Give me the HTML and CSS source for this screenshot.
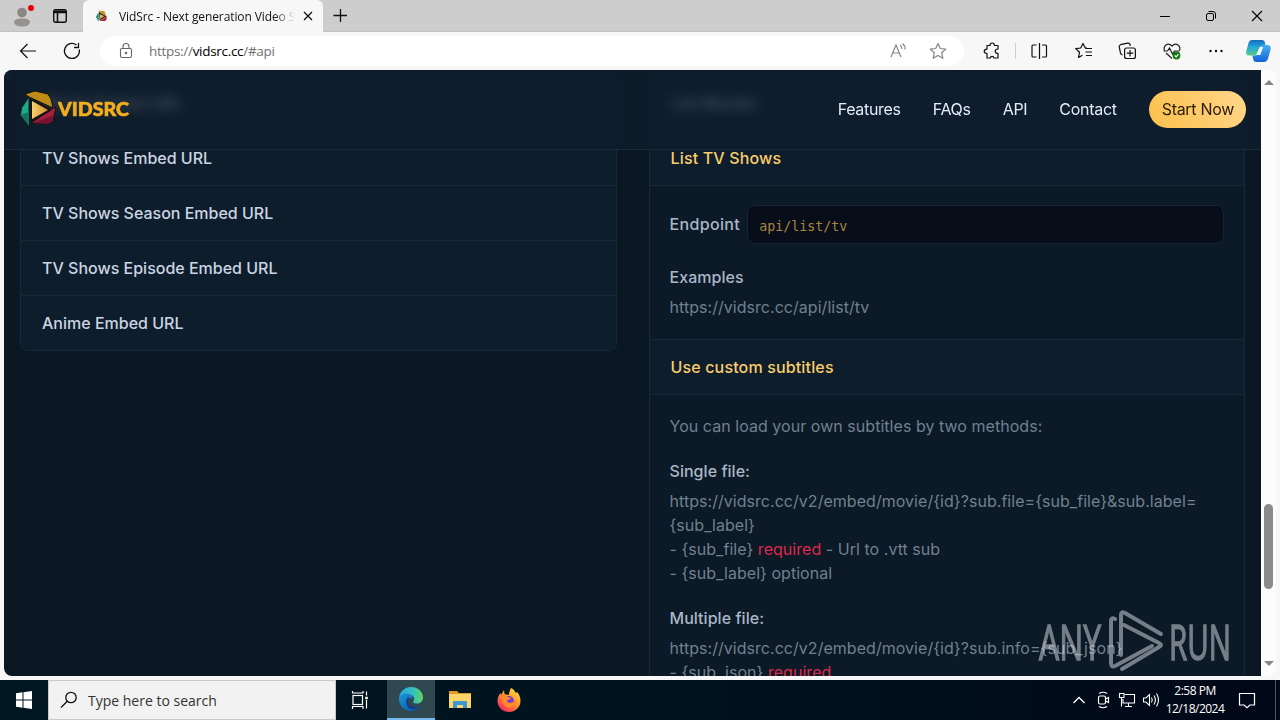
FILE: index.html
```html
<!DOCTYPE html>
<html lang="en">
<head>
  <meta charset="UTF-8">
  <meta name="viewport" content="width=device-width, initial-scale=1.0">
  <title>VidSrc - Next generation Video Streaming</title>
  <link rel="stylesheet" href="styles.css">
</head>
<body>
  <div class="desktop">

    <!-- Browser tabs -->
    <div class="tab-bar">
      <div class="tab-tools">
        <svg width="44" height="32" viewBox="0 0 44 32">
          <circle cx="22" cy="12.5" r="4.8" fill="#8a8683"/>
          <path d="M14 22.5c0-3 3-4 8-4s8 1 8 4c-1 3-4 4-8 4s-7-1-8-4z" fill="#96928f"/>
          <circle cx="31" cy="8" r="3" fill="#e8000c"/>
        </svg>
        <svg width="32" height="32" viewBox="0 0 32 32" fill="none" stroke="#111" stroke-width="1.4">
          <rect x="9.7" y="9.7" width="12.6" height="12.6" rx="2"/>
          <path d="M10 11.2h12M10 12.4h12M13.5 12v10" stroke-width="1.6"/>
        </svg>
      </div>
      <div class="tab">
        <svg class="favicon" width="12" height="12" viewBox="0 0 36 36">
          <path d="M8 2l17 1 6 15-22-13z" fill="#c39420"/>
          <path d="M8 6v29L0 21z" fill="#14866b"/>
          <path d="M33 18l-2 12-4 3H12z" fill="#b32033"/>
          <path d="M9 6l22 13L11 32z" fill="#231b14"/>
          <path d="M12 12l13 7-13 8z" fill="#e9b050"/>
        </svg>
        <span class="tab-title">VidSrc - Next generation Video Streaming</span>
        <svg width="12" height="12" viewBox="0 0 12 12" stroke="#111" stroke-width="1.3"><path d="M2 2l8 8M10 2l-8 8"/></svg>
      </div>
      <svg class="new-tab" width="34" height="32" viewBox="0 0 34 32" stroke="#111" stroke-width="1.3"><path d="M10.5 15.5h13.5M17.5 9v13"/></svg>
      <div class="window-buttons">
        <svg width="46" height="32" viewBox="0 0 46 32" stroke="#000" fill="none"><path d="M18 16.5h10"/></svg>
        <svg width="46" height="32" viewBox="0 0 46 32" stroke="#000" fill="none"><rect x="18.5" y="13.5" width="7" height="7" rx="1.5"/><path d="M20.5 11.5h4.5q2.500 0 2.500 2.500v4.500"/></svg>
        <svg width="46" height="32" viewBox="0 0 46 32" stroke="#000" stroke-width="1.1" fill="none"><path d="M18 11l10 10M28 11l-10 10"/></svg>
      </div>
    </div>

    <!-- Toolbar -->
    <div class="toolbar">
      <svg width="56" height="38" viewBox="0 0 56 38" fill="none" stroke="#111" stroke-width="1.2"><path d="M36 19H20.500M27.500 12l-7 7 7 7"/></svg>
      <svg width="32" height="38" viewBox="0 0 32 38" fill="none" stroke="#111" stroke-width="1.3"><path d="M20.500 13A7.500 7.500 0 1 0 23.300 17.500M22.500 11v4.500H18"/></svg>
      <div class="address-bar">
        <svg width="16" height="18" viewBox="0 0 16 18" fill="none" stroke="#666" stroke-width="1.1"><rect x="2.500" y="6.500" width="11" height="9" rx="1.500"/><path d="M5 6.500V4.500q0-3 3-3t3 3v2"/><circle cx="8" cy="11" r=".7" fill="#555"/></svg>
        <span class="url">https://<b>vidsrc.cc</b>/#api</span>
        <svg width="39" height="30" viewBox="0 0 39 30" fill="none" stroke="#858585" stroke-width="1.2"><path d="M11 21l5-12 5 12M12.700 17h6.600M20 9q2 1.500 2 4M22.500 7.500q3 2.500 2.600 6"/></svg>
        <svg width="39" height="30" viewBox="0 0 39 30" fill="none" stroke="#858585" stroke-width="1.2" stroke-linejoin="round"><path d="M19 7.500l2.300 5 5.500.6-4.100 3.700 1.200 5.500-4.900-2.800-4.900 2.800 1.200-5.500-4.100-3.700 5.500-.6z"/></svg>
      </div>
      <svg width="52" height="38" viewBox="0 0 52 38" fill="none" stroke="#111" stroke-width="1.2" stroke-linejoin="round"><path d="M23 13.500h3q0-2.500 2.200-2.500t2.200 2.500h3.600v3.500q-2.800 0-2.800 2.200t2.800 2.200v4.600h-4.200q0-1.700-1.700-1.700t-1.700 1.700H23v-4.500q-2.800-.200-2.800-2.200t2.800-2.200z"/></svg>
      <i class="divider"></i>
      <svg width="46" height="38" viewBox="0 0 46 38" fill="none" stroke="#111" stroke-width="1.2"><path d="M20.500 13h-3.500q-1 0-1 1v10q0 1 1 1h3.500M26 13h3.500q1 0 1 1v10q0 1-1 1H26M23.500 11v16"/></svg>
      <svg width="44" height="38" viewBox="0 0 44 38" fill="none" stroke="#111" stroke-width="1.2" stroke-linejoin="round"><path d="M25 16h-1.700L21 11.500l-2.300 4.500-5 .6 3.800 3.700-1 5.200 4-2.300M23.500 16.500H30M23.500 20H30M24 23.500h6"/></svg>
      <svg width="44" height="38" viewBox="0 0 44 38" fill="none" stroke="#111" stroke-width="1.2"><rect x="18.600" y="16" width="10.800" height="10.500" rx="2"/><path d="M24 18v6.500M20.800 21.200h6.500M16.500 23q-1.500-.5-2-2l-1.300-6q-.3-1.700 1.300-2.300l7-1.500q2-.3 2.500 1.300l.3 1.300"/></svg>
      <svg width="44" height="38" viewBox="0 0 44 38" fill="none" stroke="#222" stroke-width="1.200"><path d="M14.500 18.500c-1.500-4 3-9 7.500-4.500 4.500-4.500 9 .5 7.500 4.500M16 21l6 5.500M13.500 19h4l2-3 3 6 2-3h5"/><circle cx="26.500" cy="23.500" r="3.900" fill="#137b16" stroke="none"/><path d="M24.800 23.500l1.300 1.300 2.300-2.500" stroke="#fff"/></svg>
      <svg width="44" height="38" viewBox="0 0 44 38" fill="#111"><circle cx="16.500" cy="19" r="1.200"/><circle cx="22" cy="19" r="1.200"/><circle cx="27.500" cy="19" r="1.200"/></svg>
      <svg width="42" height="38" viewBox="0 0 42 38">
        <defs>
          <linearGradient id="copilotLeft" x1="0" y1="0" x2="0" y2="1"><stop offset="0" stop-color="#1769bd"/><stop offset=".45" stop-color="#20a8da"/><stop offset="1" stop-color="#5ccb86"/></linearGradient>
          <linearGradient id="copilotRight" x1="0" y1="0" x2="0" y2="1"><stop offset="0" stop-color="#46aff2"/><stop offset="1" stop-color="#1463d8"/></linearGradient>
        </defs>
        <path d="M14 8h10q2.500 0 3 3l.6 3h-3.500q-2 0-2.700 2l-2 5q-.8 2.500-3 2.500H11q-3.500 0-2.800-4l2.300-8.500Q11.500 8 14 8z" fill="url(#copilotLeft)"/>
        <path d="M27.500 13h2.500q3.500.5 2.500 5l-2.300 8Q29 30 26 30H18.500q-3 0-3.500-3.500l-.5-3h2.500q2.500 0 3.300-2.500l2-5.500q.7-2.500 2.700-2.500z" fill="url(#copilotRight)"/>
        <path d="M22 15h3.200l-3 8h-4z" fill="#f3fbff"/>
      </svg>
    </div>

    <div class="browser-view">
      <div class="page">
        <header class="site-header">
          <div class="logo">
            <svg width="36" height="38" viewBox="0 0 36 38">
              <defs><linearGradient id="play"><stop offset="0" stop-color="#f6d06d"/><stop offset="1" stop-color="#d5902f"/></linearGradient></defs>
              <path d="M5 4l10-3 13 3 3 5 2 9L9 7z" fill="#be8b17" stroke="#15110e"/>
              <path d="M9 7v29L.5 25l1-7z" fill="#1eaa88" stroke="#10211e"/>
              <path d="M9 22v14L.5 25z" fill="#10745f"/>
              <path d="M36 17l-3 14-5 3-17-1 20-14z" fill="#a5203f" stroke="#15110e"/>
              <path d="M13 33l21-8-2 7-5 2z" fill="#74142f"/>
              <path d="M10 8l22 12-21 13z" fill="#171412"/>
              <path d="M12 11l16 9-16 9z" fill="url(#play)"/>
            </svg>
            <svg width="72" height="22" viewBox="0 0 72 22"><text class="logo-text" x="0" y="17.500" textLength="71" lengthAdjust="spacingAndGlyphs">VIDSRC</text></svg>
          </div>
          <nav class="nav">
            <a>Features</a>
            <a>FAQs</a>
            <a>API</a>
            <a>Contact</a>
            <a class="start-btn">Start Now</a>
          </nav>
        </header>

        <main class="columns">
          <section class="accordion short">
            <h3>Movie Embed URL</h3>
            <h3>TV Shows Embed URL</h3>
            <h3>TV Shows Season Embed URL</h3>
            <h3>TV Shows Episode Embed URL</h3>
            <h3>Anime Embed URL</h3>
          </section>

          <section class="accordion">
            <h3>List Movies</h3>
            <h3 class="open">List TV Shows</h3>
            <div class="panel">
              <div class="endpoint"><strong>Endpoint</strong><code>api/list/tv</code></div>
              <h4>Examples</h4>
              <p>https://vidsrc.cc/api/list/tv</p>
            </div>
            <h3 class="open">Use custom subtitles</h3>
            <div class="panel">
              <p class="intro">You can load your own subtitles by two methods:</p>
              <h4>Single file:</h4>
              <p class="lines">https://vidsrc.cc/v2/embed/movie/{id}?sub.file={sub_file}&amp;sub.label=<br>{sub_label}<br>- {sub_file} <em>required</em> - Url to .vtt sub<br>- {sub_label} optional</p>
              <h4>Multiple file:</h4>
              <p>https://vidsrc.cc/v2/embed/movie/{id}?sub.info={sub_json}<br>- {sub_json} <em>required</em></p>
            </div>
          </section>
        </main>

        <svg class="watermark" width="194" height="64" viewBox="0 0 194 64">
          <text x="1" y="51" textLength="62" lengthAdjust="spacingAndGlyphs">ANY</text>
          <text x="131" y="51" textLength="62" lengthAdjust="spacingAndGlyphs">RUN</text>
          <g fill="none" stroke-width="4" stroke-linejoin="round" stroke-linecap="round">
            <path d="M77 10q-4-2-4 2v42q0 5 4 3l37-20"/>
            <path d="M83 46V6q0-4 4-2l36 21"/>
            <path d="M86 16l35 18q4 2 0 4L84 60"/>
          </g>
        </svg>
      </div>

      <div class="scrollbar">
        <i class="arrow up"></i>
        <i class="thumb"></i>
        <i class="arrow down"></i>
      </div>
    </div>

    <!-- Windows taskbar -->
    <div class="taskbar">
      <svg width="48" height="40" viewBox="0 0 48 40" fill="#fff"><path d="M16 13.300l6.500-1v7.200H16zM23.500 12.200l8.500-1.200v8.500h-8.500zM16 20.500h6.500v7.200l-6.500-1zM23.500 20.500H32V29l-8.500-1.200z"/></svg>
      <div class="search">
        <svg width="18" height="18" viewBox="0 0 18 18" fill="none" stroke="#111" stroke-width="1.300"><circle cx="11" cy="6.500" r="5.200"/><path d="M7.300 10.200L1 16.500"/></svg>
        <span>Type here to search</span>
      </div>
      <svg width="48" height="40" viewBox="0 0 48 40" fill="none" stroke="#fff" stroke-width="1.200"><rect x="17" y="15.500" width="9.500" height="9"/><path d="M16.500 11v2h10.500v-2M16.500 29v-2.500h10.500V29M30.500 11.500v4M30.500 20v8.500"/><path d="M29.200 18h2.600" stroke-width="2.500"/></svg>
      <div class="task active">
        <svg width="24" height="24" viewBox="0 0 24 24">
          <defs>
            <linearGradient id="edgeTop"><stop offset="0" stop-color="#2aa6e0"/><stop offset=".6" stop-color="#35c1c0"/><stop offset="1" stop-color="#62d65c"/></linearGradient>
            <linearGradient id="edgeSide" x1="0" y1="0" x2="1" y2="1"><stop offset="0" stop-color="#1c96dc"/><stop offset="1" stop-color="#0d4d9c"/></linearGradient>
          </defs>
          <path d="M0 11C1 4 6 0 12 0c7 0 12 5 12 10.500 0 4-3 6-6.500 6-3 0-4-1.500-3-2.500 2-2.500 0-6.500-5-6.500-4 0-7.500 1-9.500 3.500z" fill="url(#edgeTop)"/>
          <path d="M0 12c0-3 3-5.500 7-5.500 3.500 0 6.500 1.500 7 5-1-1-5-1-5.500 3-.5 5 5.500 8 12.500 5C18 23 15 24 12 24 5 24 0 18.500 0 12z" fill="url(#edgeSide)"/>
          <path d="M9 10c-3 3-2 8 1 11 3 2 8 1 11-1.500-6 2-12-.5-12-4.500 0-1.500.5-2.500 1.500-3.500z" fill="#103f85"/>
        </svg>
      </div>
      <div class="task">
        <svg width="22" height="20" viewBox="0 0 22 20"><path d="M0 1h8l2 2h12v5H0z" fill="#dc9a28"/><path d="M0 4h22v14H0z" fill="#fbd568"/><path d="M4 18v-6q0-1 1-1h12q1 0 1 1v6h-4v-3H8v3z" fill="#3d95d1"/></svg>
      </div>
      <div class="task">
        <svg width="24" height="24" viewBox="0 0 24 24">
          <defs><linearGradient id="fox" x1=".9" y1="0" x2=".2" y2="1"><stop offset="0" stop-color="#ffe440"/><stop offset=".45" stop-color="#ff9a2d"/><stop offset="1" stop-color="#f4215e"/></linearGradient></defs>
          <path d="M14 0c3 1 4 4 5 5l1-1c2 2 3.500 5 3.500 9C23.500 19.500 18 24 12 24S.5 19.500.5 13c0-3 1-6 3-8l.5 2 3-5 .5 4 4 1c1-2 1-5 2.500-7z" fill="url(#fox)"/>
          <circle cx="12" cy="13" r="5" fill="#7b3bd0"/>
          <path d="M5 8q4-1 6 1l3 1q-1 2-4 2 0 3 4 3 4-1 4-5 3 6-2 8.500-6 2.500-9-1.500Q4 13 5 8z" fill="#ff8b28"/>
        </svg>
      </div>
      <div class="tray">
        <svg width="24" height="40" viewBox="0 0 24 40" fill="none" stroke="#fff" stroke-width="1.300"><path d="M6.500 23l5.500-5.500 5.500 5.500"/></svg>
        <svg width="24" height="40" viewBox="0 0 24 40" fill="none" stroke="#fff" stroke-width="1.200"><rect x="7.500" y="16" width="7" height="8" rx="1.500"/><path d="M14.500 19l3-1.500v5l-3-1.500M8 13.500q4-2.500 8 0M8 26.500q4 2.500 8 0"/></svg>
        <svg width="24" height="40" viewBox="0 0 24 40" fill="none" stroke="#fff" stroke-width="1.100"><path d="M10 14.500h9.500v8.500H8v-4M13.500 23v3.500M10 26.500h7"/><path d="M4.500 13.500h4.500v4H4.500zM6.500 17.500v9"/></svg>
        <svg width="24" height="40" viewBox="0 0 24 40" fill="none" stroke="#fff" stroke-width="1.100"><path d="M4.500 18h2.500l3.500-3.500v11L7 22H4.500zM12.500 17.500q1.500 2.500 0 5M15 15.500q2.800 4.500 0 9M17.500 13.500q4 6.500 0 13"/></svg>
        <div class="clock"><span>2:58 PM</span><span>12/18/2024</span></div>
        <svg width="40" height="40" viewBox="0 0 40 40" fill="none" stroke="#fff" stroke-width="1.200"><path d="M12.500 13.500h15v11.500H23l-3 2.700-3-2.700h-4.500z"/></svg>
        <i class="peek"></i>
      </div>
    </div>
  </div>
</body>
</html>
```
FILE: styles.css
```css
* {
  box-sizing: border-box;
}

body {
  margin: 0;
  overflow: hidden;
  font-family: "Open Sans", "Noto Sans", sans-serif;
}

svg {
  display: block;
  flex-shrink: 0;
}

.desktop {
  width: 1280px;
  height: 720px;
  display: flex;
  flex-direction: column;
  background: #f7f7f7;
}

/* tabs */
.tab-bar {
  display: flex;
  height: 32px;
  background: #cdcdcd;
  border-bottom: 1px solid #c2c2c2;
}

.tab-tools {
  display: flex;
  width: 83px;
}

.tab {
  display: flex;
  align-items: center;
  width: 240px;
  height: 32px;
  padding: 0 9px 0 13px;
  background: #f7f7f7;
  border-radius: 6px 6px 0 0;
}

.tab-title {
  flex: 1;
  margin: 0 7px 0 11px;
  overflow: hidden;
  white-space: nowrap;
  font-size: 12px;
  letter-spacing: -0.1px;
  color: #111;
  -webkit-mask-image: linear-gradient(90deg, #000 88%, transparent);
  mask-image: linear-gradient(90deg, #000 88%, transparent);
}

.window-buttons {
  display: flex;
  margin-left: auto;
}

/* toolbar */
.toolbar {
  display: flex;
  align-items: center;
  height: 38px;
}

.address-bar {
  display: flex;
  align-items: center;
  width: 864px;
  height: 30px;
  margin-left: 12px;
  padding: 0 6px 0 18px;
  border-radius: 15px;
  background: #fff;
}

.url {
  flex: 1;
  margin-left: 15px;
  font-size: 13.5px;
  letter-spacing: -0.3px;
  color: #707070;
}

.url b {
  font-weight: 400;
  color: #000;
}

.divider {
  width: 1px;
  height: 16px;
  margin: 0 0 0 -1px;
  background: #cfcfcf;
}

/* browser content */
.browser-view {
  display: flex;
  height: 606px;
  margin: 0 4px;
}

.page {
  position: relative;
  width: 1257px;
  height: 606px;
  overflow: hidden;
  border-radius: 8px 0 0 8px;
  background: #0b1823;
  font-family: Inter, "Liberation Sans", sans-serif;
  font-size: 16px;
  line-height: 24px;
}

.site-header {
  position: absolute;
  top: 0;
  left: 0;
  z-index: 1;
  display: flex;
  align-items: center;
  justify-content: space-between;
  width: 100%;
  height: 80px;
  padding: 0 15px 1px 16px;
  background: rgba(14, 29, 44, 0.7);
  border-bottom: 1px solid #1a2b3a;
  backdrop-filter: blur(6px);
}

.logo {
  display: flex;
  align-items: center;
  gap: 2px;
}

.logo-text {
  font: 900 18px Lato, sans-serif;
  fill: #f4ae1c;
  stroke: #f4ae1c;
  stroke-width: 0.6px;
}

.nav {
  display: flex;
  align-items: center;
  gap: 32px;
  letter-spacing: -0.3px;
  color: #e2ecf9;
}

.start-btn {
  height: 37px;
  padding: 6px 12px 6px 13px;
  border-radius: 19px;
  background: linear-gradient(60deg, #fcc04c, #ffd68a);
  color: #2b1b07;
}

.columns {
  display: flex;
  align-items: flex-start;
  gap: 32px;
  padding: 6px 16px 0;
}

.accordion {
  width: 597px;
  border: 1px solid #172939;
  border-top: 0;
  background: #0c1926;
}

.accordion.short {
  border-radius: 0 0 8px 8px;
  overflow: hidden;
}

.accordion h3 {
  height: 55px;
  margin: 0;
  padding: 15px 21px;
  border-bottom: 1px solid #172939;
  background: #0e1d2c;
  font-size: 16px;
  font-weight: 500;
  color: #cbd5e1;
}

.accordion.short h3:last-child {
  height: 54px;
  border-bottom: 0;
}

.accordion h3.open {
  letter-spacing: 0.15px;
  color: #f9cd69;
}

.panel {
  padding: 19px 20px 20px;
  border-bottom: 1px solid #172939;
  letter-spacing: 0.04px;
  color: #70818f;
}

.endpoint {
  display: flex;
  align-items: center;
  gap: 7px;
  height: 39px;
  margin-bottom: 21px;
}

.endpoint strong,
.panel h4 {
  font-size: 16px;
  font-weight: 500;
  color: #a9b7c8;
}

.endpoint strong {
  padding-bottom: 1px;
  letter-spacing: 0.35px;
}

.endpoint code {
  flex: 1;
  height: 39px;
  padding: 9px 11px;
  border: 1px solid #152433;
  border-radius: 8px;
  background: #070e19;
  color: #a98540;
  font-family: "DejaVu Sans Mono", monospace;
  font-size: 13.3px;
  letter-spacing: 0;
}

.panel h4 {
  margin: 0 0 6px;
}

.panel p {
  margin: 0;
}

.panel .intro,
.panel .lines {
  margin-bottom: 21px;
}

.panel em {
  font-style: normal;
  color: #dc2a4c;
}

.watermark {
  position: absolute;
  right: 29px;
  bottom: 3px;
  opacity: 0.5;
  stroke: #dfe3e8;
}

.watermark text {
  font: 50px "Open Sans", sans-serif;
  fill: #dfe3e8;
  stroke-width: 1.4px;
}

.scrollbar {
  display: flex;
  flex-direction: column;
  align-items: center;
  width: 15px;
  padding: 10px 0;
  background: #fcfcfc;
  border-radius: 0 8px 8px 0;
}

.arrow {
  border: 5px solid transparent;
}

.arrow.up {
  border-top: 0;
  border-bottom-color: #858585;
}

.arrow.down {
  margin-top: auto;
  border-bottom: 0;
  border-top-color: #858585;
}

.thumb {
  width: 9px;
  height: 85px;
  margin-top: 419px;
  border-radius: 5px;
  background: #8b8b8b;
}

/* taskbar */
.taskbar {
  display: flex;
  height: 40px;
  margin-top: 4px;
  background: linear-gradient(90deg, #001620, #00131f 50%, #010817);
}

.search {
  display: flex;
  align-items: center;
  gap: 10px;
  width: 288px;
  padding-left: 11px;
  border: 1px solid #c9c9c9;
  background: #f2f2f2;
  font-size: 14px;
  color: #333;
}

.task {
  display: flex;
  align-items: center;
  justify-content: center;
  width: 48px;
  margin-right: 1px;
}

.task.active {
  margin-left: 3px;
  background: #304950;
  border-bottom: 2px solid #76b9ed;
}

.tray {
  display: flex;
  margin-left: auto;
}

.clock {
  display: flex;
  flex-direction: column;
  align-items: center;
  width: 64px;
  padding-top: 2px;
  font-size: 12px;
  line-height: 18px;
  letter-spacing: -0.5px;
  color: #fff;
}

.peek {
  width: 5px;
  margin-left: 8px;
  border-left: 1px solid #4a5563;
}
```
